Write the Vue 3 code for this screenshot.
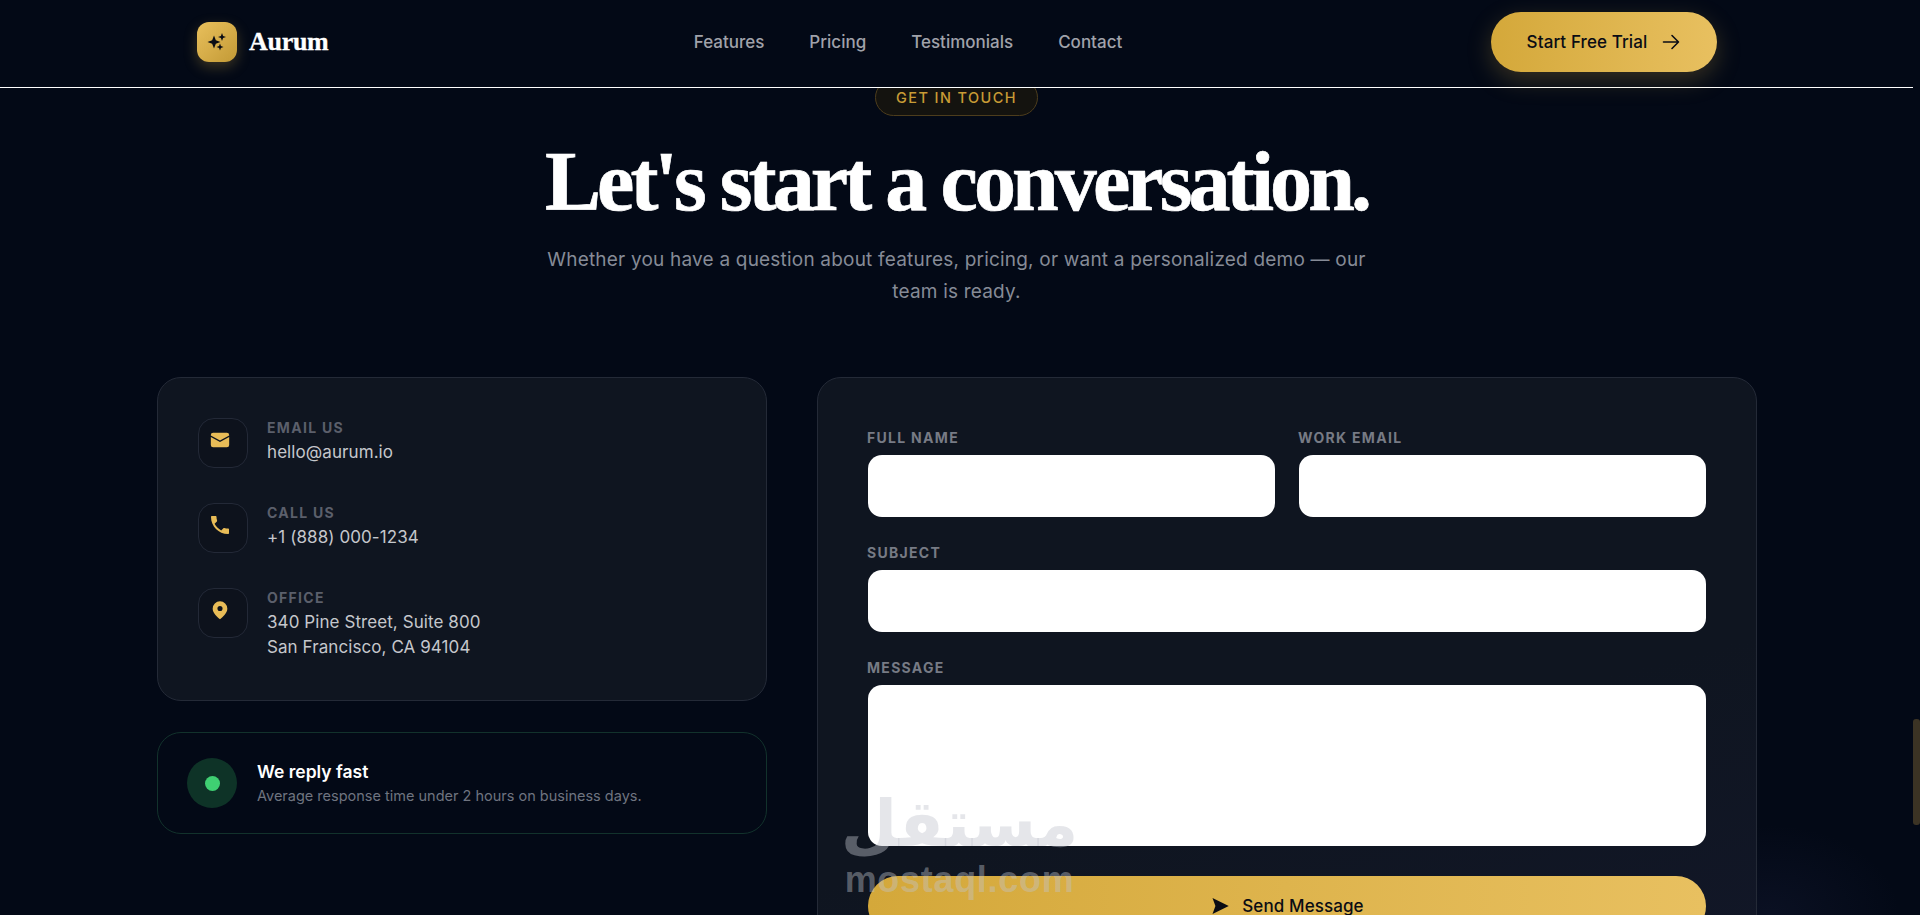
<script setup>
const navLinks = ['Features', 'Pricing', 'Testimonials', 'Contact']
</script>

<template>
  <div class="screen">
    <div class="page">
      <header class="topbar">
        <div class="brand">
          <span class="logo">
            <svg viewBox="0 0 24 24" width="20" height="20" fill="#0a0c14">
              <path d="M8.4 4.200L10.600 9.800 16.200 12 10.600 14.200 8.400 19.800 6.200 14.200 .6 12 6.200 9.800z" />
              <path d="M18 1.200L19.300 4.700 22.800 6 19.300 7.300 18 10.800 16.700 7.300 13.200 6 16.700 4.700z" />
              <path d="M15.600 13.800L16.700 16.900 19.800 18 16.700 19.100 15.600 22.200 14.500 19.100 11.400 18 14.500 16.900z" />
            </svg>
          </span>
          <span class="brand-name">Aurum</span>
        </div>
        <nav class="nav">
          <a v-for="l in navLinks" :key="l">{{ l }}</a>
        </nav>
        <button class="cta">
          Start Free Trial
          <svg viewBox="0 0 24 24" width="20" height="20" fill="none" stroke="#0a0c14" stroke-width="1.900" stroke-linecap="round" stroke-linejoin="round">
            <path d="M3 12h18M13.200 4.200L21 12l-7.800 7.800" />
          </svg>
        </button>
      </header>

      <main class="main">
        <section class="hero">
          <span class="badge">GET IN TOUCH</span>
          <h1>Let's start a conversation.</h1>
          <p>Whether you have a question about features, pricing, or want a personalized demo — our team is ready.</p>
        </section>

        <section class="grid">
          <div class="left">
            <div class="info card">
              <div class="row">
                <span class="ico">
                  <svg viewBox="0 0 24 24" width="22" height="22" fill="#e8bc57">
                    <path d="M2 6.500A2.500 2.500 0 0 1 4.500 4h15A2.500 2.500 0 0 1 22 6.500v.6l-10 5.400L2 7.100z" />
                    <path d="M2 8.800l10 5.400 10-5.400v8.700a2.500 2.500 0 0 1-2.500 2.500h-15A2.500 2.500 0 0 1 2 17.500z" />
                  </svg>
                </span>
                <div class="txt">
                  <span class="lab">EMAIL US</span>
                  <span class="val">hello@aurum.io</span>
                </div>
              </div>
              <div class="row">
                <span class="ico">
                  <svg viewBox="0 0 24 24" width="24" height="24" fill="#e8bc57">
                    <path d="M6.600 10.800c1.400 2.800 3.800 5.100 6.600 6.600l2.200-2.200c.3-.3.7-.4 1-.2 1.100.4 2.300.6 3.600.6.6 0 1 .4 1 1V20c0 .6-.4 1-1 1C10.600 21 3 13.400 3 4c0-.6.4-1 1-1h3.500c.6 0 1 .4 1 1 0 1.300.2 2.500.6 3.600.1.3 0 .7-.2 1z" />
                  </svg>
                </span>
                <div class="txt">
                  <span class="lab">CALL US</span>
                  <span class="val">+1 (888) 000-1234</span>
                </div>
              </div>
              <div class="row">
                <span class="ico">
                  <svg viewBox="0 0 24 24" width="22" height="22">
                    <path fill="#e8bc57" fill-rule="evenodd" d="M12 2.500a8 8 0 0 1 8 8c0 5-5.500 9.500-8 11.500-2.500-2-8-6.500-8-11.500a8 8 0 0 1 8-8zm0 5a2.800 2.800 0 1 0 0 5.600 2.800 2.800 0 0 0 0-5.600z" />
                  </svg>
                </span>
                <div class="txt">
                  <span class="lab">OFFICE</span>
                  <span class="val">340 Pine Street, Suite 800<br />San Francisco, CA 94104</span>
                </div>
              </div>
            </div>
            <div class="fast">
              <span class="halo"><span class="dot"></span></span>
              <div class="fast-txt">
                <strong>We reply fast</strong>
                <span>Average response time under 2 hours on business days.</span>
              </div>
            </div>
          </div>

          <form class="form card" @submit.prevent>
            <div class="two">
              <label class="field"><span>FULL NAME</span><input type="text" /></label>
              <label class="field"><span>WORK EMAIL</span><input type="text" /></label>
            </div>
            <label class="field"><span>SUBJECT</span><input type="text" /></label>
            <label class="field"><span>MESSAGE</span><textarea></textarea></label>
            <button class="send">
              <svg viewBox="0 0 24 24" width="20" height="20" fill="#0a0c14">
                <path d="M3 2.500L22.500 12 3 21.500 6.500 12z" />
              </svg>
              Send Message
            </button>
          </form>
        </section>
      </main>

      <div class="mark">
        <span class="mark-ar">مستقل</span>
        <span class="mark-en">mostaql.com</span>
      </div>
    </div>
    <div class="rail"><span class="thumb"></span></div>
  </div>
</template>

<style>
html, body { margin: 0; background: #030916; overflow: hidden; }
</style>

<style scoped>
.screen { display: flex; width: 1920px; height: 915px; overflow: hidden; background: radial-gradient(130px 90px at 1770px 915px, rgba(60, 65, 120, .13), rgba(60, 65, 120, 0)), #030916; font-family: Inter, "Liberation Sans", sans-serif; }
.page { width: 1913px; height: 915px; display: flex; flex-direction: column; position: relative; }
.rail { width: 7px; display: flex; flex-direction: column; }
.thumb { display: block; width: 7px; height: 106px; margin-top: 719px; background: #3b3324; border-radius: 3px; }

.topbar { height: 88px; box-sizing: border-box; border-bottom: 1px solid #fff; padding: 0 196px 3px 197px; display: flex; align-items: center; justify-content: space-between; background: #030916; flex: none; position: relative; z-index: 2; }
.brand { display: flex; align-items: center; gap: 12px; width: 128px; }
.logo { width: 40px; height: 40px; flex: none; border-radius: 12px; background: linear-gradient(135deg, #e9c05c, #c39a36); box-shadow: 0 5px 14px rgba(212, 168, 67, .28); display: flex; align-items: center; justify-content: center; }
.brand-name { font-family: "Liberation Serif", serif; font-weight: 700; font-size: 26px; color: #fff; letter-spacing: -.3px; -webkit-text-stroke: .3px #fff; }
.nav { display: flex; gap: 45px; font-size: 17px; font-weight: 500; color: #a0a2aa; }
.cta { width: 226px; height: 60px; border: 0; border-radius: 30px; background: linear-gradient(90deg, #d4a83a, #e8c060); box-shadow: 0 8px 24px rgba(212, 168, 67, .25); display: flex; align-items: center; justify-content: center; gap: 14px; font: 500 17px Inter, sans-serif; letter-spacing: .1px; color: #0a0c14; }

.main { flex: 1; overflow: hidden; }
.hero { display: flex; flex-direction: column; align-items: center; text-align: center; }
.badge { margin-top: -9px; width: 163px; height: 37px; box-sizing: border-box; border: 1px solid #4d3d1c; border-radius: 19px; background: #14130f; color: #c89b35; font-size: 14.500px; font-weight: 500; letter-spacing: 1.400px; display: flex; align-items: center; justify-content: center; }
h1 { margin: 18px 0 0; font-family: "Liberation Serif", serif; font-weight: 700; font-size: 84px; line-height: 96px; color: #fff; letter-spacing: -3.900px; -webkit-text-stroke: .7px #fff; white-space: nowrap; }
.hero p { margin: 14px 0 0; width: 840px; font-size: 19px; line-height: 32px; letter-spacing: .2px; color: #868b97; }

.grid { display: grid; grid-template-columns: 610px 940px; gap: 50px; margin: 69px 0 0 157px; width: 1600px; }
.card { background: #0f1520; border: 1px solid #242a37; border-radius: 24px; box-sizing: border-box; }
.left { display: flex; flex-direction: column; gap: 31px; }
.info { padding: 40px; display: flex; flex-direction: column; gap: 35px; height: 324px; }
.row { display: flex; gap: 19px; }
.ico { width: 50px; height: 50px; flex: none; box-sizing: border-box; border: 1px solid #232937; border-radius: 16px; background: #0d121c; display: flex; align-items: center; justify-content: center; padding: 0 6px 6px 0; }
.txt { display: flex; flex-direction: column; }
.lab { font-size: 14px; font-weight: 700; letter-spacing: 1.300px; color: #5b5f6b; line-height: 20px; }
.val { font-size: 17px; color: #c5c7cc; line-height: 25px; margin-top: 2px; letter-spacing: .08px; }

.fast { height: 102px; box-sizing: border-box; border: 1px solid #12322c; border-radius: 24px; padding: 0 29px; display: flex; align-items: center; gap: 20px; }
.halo { width: 50px; height: 50px; flex: none; border-radius: 50%; background: #0e3327; display: flex; align-items: center; justify-content: center; }
.dot { width: 15px; height: 15px; border-radius: 50%; background: #3fcf72; }
.fast-txt { display: flex; flex-direction: column; gap: 2px; }
.fast-txt strong { color: #fff; font-size: 17.500px; font-weight: 600; line-height: 24px; }
.fast-txt span { color: #6f7480; font-size: 14.500px; line-height: 20px; }

.form { padding: 50px 50px 0; display: flex; flex-direction: column; gap: 26px; height: 600px; background: linear-gradient(165deg, #0f1520 60%, #121728); }
.two { display: grid; grid-template-columns: 407px 407px; gap: 24px; }
.field { display: flex; flex-direction: column; gap: 8px; }
.field span { font-size: 14px; font-weight: 700; letter-spacing: 1.300px; color: #777b85; line-height: 19px; margin-left: -1px; }
input, textarea { display: block; border: 0; outline: 0; background: #fff; border-radius: 14px; width: 100%; height: 62px; box-sizing: border-box; resize: none; }
textarea { height: 161px; }
.send { margin-top: 4px; flex: none; height: 60px; border: 0; border-radius: 30px; background: linear-gradient(90deg, #d4a83a, #e8c060); display: flex; align-items: center; justify-content: center; gap: 12px; font: 500 17px Inter, sans-serif; letter-spacing: .1px; color: #0a0c14; }

.mark { position: absolute; left: 845px; top: 788px; width: 229px; z-index: 3; display: flex; flex-direction: column; align-items: center; pointer-events: none; color: rgba(193, 196, 204, .42); }
.mark-ar { font: 700 65px "DejaVu Sans", sans-serif; line-height: 72px; }
.mark-en { font: 700 36px "Liberation Sans", sans-serif; line-height: 40px; letter-spacing: .7px; }
</style>
